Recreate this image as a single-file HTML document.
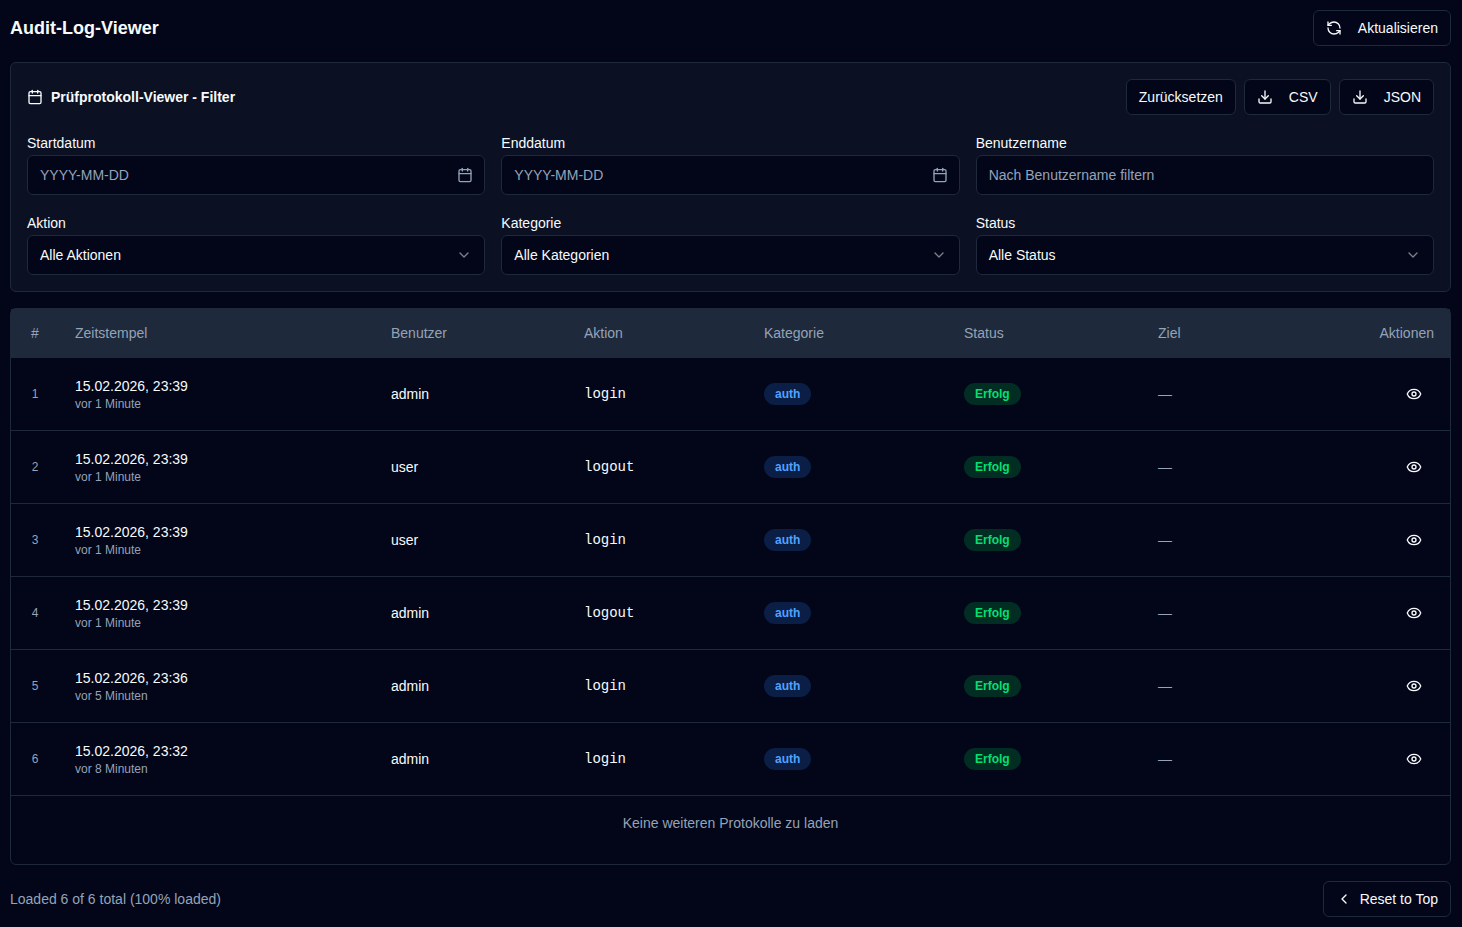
<!DOCTYPE html>
<html lang="de">
<head>
<meta charset="utf-8">
<title>Audit-Log-Viewer</title>
<style>
*{box-sizing:border-box;margin:0;padding:0}
html,body{width:1462px;height:927px;overflow:hidden}
body{background:#020618;color:#f8fafc;font-family:"Liberation Sans",sans-serif;font-size:14px;line-height:20px;position:relative}
svg{display:block}
.ic{fill:none;stroke:currentColor;stroke-width:2;stroke-linecap:round;stroke-linejoin:round}
.hdr{position:absolute;left:10px;top:10px;width:1441px;height:36px;display:flex;align-items:center;justify-content:space-between}
.title{font-size:18px;font-weight:bold;line-height:28px}
.btn{height:36px;border:1px solid #1e293b;border-radius:6px;background:#020618;color:#f8fafc;display:flex;align-items:center;padding:0 12px;font-size:14px;white-space:nowrap}
.btn .ic{width:16px;height:16px;margin-right:16px}
.card{position:absolute;left:10px;width:1441px;border:1px solid #1e293b;border-radius:6px}
.filter{top:62px;height:230px;background:#0b1122;padding:16px}
.fhead{display:flex;justify-content:space-between;align-items:center;height:36px}
.ftitle{display:flex;align-items:center;font-weight:bold}
.ftitle .ic{width:16px;height:16px;margin-right:8px}
.btns{display:flex;gap:8px}
.grid{display:grid;grid-template-columns:1fr 1fr 1fr;column-gap:16px;row-gap:16px;margin-top:16px}
.lbl{line-height:24px;height:24px}
.inp{height:40px;border:1px solid #1e293b;border-radius:6px;background:#020618;display:flex;align-items:center;justify-content:space-between;padding:0 12px}
.ph{color:#94a3b8}
.inp .ic{width:16px;height:16px;color:#94a3b8}
.inp .chev{color:#f8fafc;opacity:.5}
.inp .cal{margin-right:-1px}
.table{top:308px;height:557px;background:#020618}
table{border-collapse:collapse;table-layout:fixed;width:1439px}
th{height:48px;background:#1e293b;color:#94a3b8;font-weight:normal;text-align:left;padding:0 16px;border-bottom:1px solid #1e293b}
td{height:73px;padding:0 16px;border-bottom:1px solid #1e293b;vertical-align:middle}
.num{text-align:center;color:#94a3b8;font-size:12px}
th.num{font-size:14px}
.ts1{line-height:20px}
.ts2{font-size:12px;line-height:16px;color:#94a3b8}
.mono{font-family:"Liberation Mono",monospace}
.badge{display:inline-block;border-radius:9999px;border:1px solid transparent;padding:2px 10px;font-size:12px;font-weight:bold;line-height:16px;vertical-align:middle}
.b-auth{background:#0a1e46;color:#51a2ff}
.b-ok{background:#022d23;color:#05df72}
.dash{color:#94a3b8}
.eye{width:40px;height:40px;display:flex;align-items:center;justify-content:center;margin-left:auto}
.eye .ic{width:16px;height:16px}
.more{position:absolute;left:0;top:504px;width:1439px;text-align:center;color:#94a3b8}
.foot{position:absolute;left:10px;top:881px;width:1441px;height:36px;display:flex;align-items:center;justify-content:space-between}
.foot .txt{color:#94a3b8}
.foot .btn .ic{margin-right:8px}
</style>
</head>
<body>
<div class="hdr">
  <div class="title">Audit-Log-Viewer</div>
  <div class="btn"><svg class="ic" viewBox="0 0 24 24"><path d="M21 12a9 9 0 0 0-9-9 9.75 9.75 0 0 0-6.74 2.74L3 8"/><path d="M3 3v5h5"/><path d="M3 12a9 9 0 0 0 9 9 9.75 9.75 0 0 0 6.74-2.74L21 16"/><path d="M16 16h5v5"/></svg>Aktualisieren</div>
</div>

<div class="card filter">
  <div class="fhead">
    <div class="ftitle"><svg class="ic" viewBox="0 0 24 24"><path d="M8 2v4"/><path d="M16 2v4"/><rect width="18" height="18" x="3" y="4" rx="2"/><path d="M3 10h18"/></svg>Prüfprotokoll-Viewer - Filter</div>
    <div class="btns">
      <div class="btn">Zurücksetzen</div>
      <div class="btn"><svg class="ic" viewBox="0 0 24 24"><path d="M12 15V3"/><path d="M21 15v4a2 2 0 0 1-2 2H5a2 2 0 0 1-2-2v-4"/><path d="m7 10 5 5 5-5"/></svg>CSV</div>
      <div class="btn"><svg class="ic" viewBox="0 0 24 24"><path d="M12 15V3"/><path d="M21 15v4a2 2 0 0 1-2 2H5a2 2 0 0 1-2-2v-4"/><path d="m7 10 5 5 5-5"/></svg>JSON</div>
    </div>
  </div>
  <div class="grid">
    <div><div class="lbl">Startdatum</div><div class="inp"><span class="ph">YYYY-MM-DD</span><svg class="ic cal" viewBox="0 0 24 24"><path d="M8 2v4"/><path d="M16 2v4"/><rect width="18" height="18" x="3" y="4" rx="2"/><path d="M3 10h18"/></svg></div></div>
    <div><div class="lbl">Enddatum</div><div class="inp"><span class="ph">YYYY-MM-DD</span><svg class="ic cal" viewBox="0 0 24 24"><path d="M8 2v4"/><path d="M16 2v4"/><rect width="18" height="18" x="3" y="4" rx="2"/><path d="M3 10h18"/></svg></div></div>
    <div><div class="lbl">Benutzername</div><div class="inp"><span class="ph">Nach Benutzername filtern</span></div></div>
    <div><div class="lbl">Aktion</div><div class="inp"><span>Alle Aktionen</span><svg class="ic chev" viewBox="0 0 24 24"><path d="m6 9 6 6 6-6"/></svg></div></div>
    <div><div class="lbl">Kategorie</div><div class="inp"><span>Alle Kategorien</span><svg class="ic chev" viewBox="0 0 24 24"><path d="m6 9 6 6 6-6"/></svg></div></div>
    <div><div class="lbl">Status</div><div class="inp"><span>Alle Status</span><svg class="ic chev" viewBox="0 0 24 24"><path d="m6 9 6 6 6-6"/></svg></div></div>
  </div>
</div>

<div class="card table">
  <table>
    <colgroup><col style="width:48px"><col style="width:316px"><col style="width:193px"><col style="width:180px"><col style="width:200px"><col style="width:194px"><col style="width:150px"><col></colgroup>
    <thead><tr><th class="num">#</th><th>Zeitstempel</th><th>Benutzer</th><th>Aktion</th><th>Kategorie</th><th>Status</th><th>Ziel</th><th style="text-align:right">Aktionen</th></tr></thead>
    <tbody>
<tr><td class="num">1</td><td><div class="ts1">15.02.2026, 23:39</div><div class="ts2">vor 1 Minute</div></td><td>admin</td><td class="mono">login</td><td><span class="badge b-auth">auth</span></td><td><span class="badge b-ok">Erfolg</span></td><td class="dash">—</td><td><div class="eye"><svg class="ic" viewBox="0 0 24 24"><path d="M2.062 12.348a1 1 0 0 1 0-.696 10.75 10.75 0 0 1 19.876 0 1 1 0 0 1 0 .696 10.75 10.75 0 0 1-19.876 0"/><circle cx="12" cy="12" r="3"/></svg></div></td></tr>
<tr><td class="num">2</td><td><div class="ts1">15.02.2026, 23:39</div><div class="ts2">vor 1 Minute</div></td><td>user</td><td class="mono">logout</td><td><span class="badge b-auth">auth</span></td><td><span class="badge b-ok">Erfolg</span></td><td class="dash">—</td><td><div class="eye"><svg class="ic" viewBox="0 0 24 24"><path d="M2.062 12.348a1 1 0 0 1 0-.696 10.75 10.75 0 0 1 19.876 0 1 1 0 0 1 0 .696 10.75 10.75 0 0 1-19.876 0"/><circle cx="12" cy="12" r="3"/></svg></div></td></tr>
<tr><td class="num">3</td><td><div class="ts1">15.02.2026, 23:39</div><div class="ts2">vor 1 Minute</div></td><td>user</td><td class="mono">login</td><td><span class="badge b-auth">auth</span></td><td><span class="badge b-ok">Erfolg</span></td><td class="dash">—</td><td><div class="eye"><svg class="ic" viewBox="0 0 24 24"><path d="M2.062 12.348a1 1 0 0 1 0-.696 10.75 10.75 0 0 1 19.876 0 1 1 0 0 1 0 .696 10.75 10.75 0 0 1-19.876 0"/><circle cx="12" cy="12" r="3"/></svg></div></td></tr>
<tr><td class="num">4</td><td><div class="ts1">15.02.2026, 23:39</div><div class="ts2">vor 1 Minute</div></td><td>admin</td><td class="mono">logout</td><td><span class="badge b-auth">auth</span></td><td><span class="badge b-ok">Erfolg</span></td><td class="dash">—</td><td><div class="eye"><svg class="ic" viewBox="0 0 24 24"><path d="M2.062 12.348a1 1 0 0 1 0-.696 10.75 10.75 0 0 1 19.876 0 1 1 0 0 1 0 .696 10.75 10.75 0 0 1-19.876 0"/><circle cx="12" cy="12" r="3"/></svg></div></td></tr>
<tr><td class="num">5</td><td><div class="ts1">15.02.2026, 23:36</div><div class="ts2">vor 5 Minuten</div></td><td>admin</td><td class="mono">login</td><td><span class="badge b-auth">auth</span></td><td><span class="badge b-ok">Erfolg</span></td><td class="dash">—</td><td><div class="eye"><svg class="ic" viewBox="0 0 24 24"><path d="M2.062 12.348a1 1 0 0 1 0-.696 10.75 10.75 0 0 1 19.876 0 1 1 0 0 1 0 .696 10.75 10.75 0 0 1-19.876 0"/><circle cx="12" cy="12" r="3"/></svg></div></td></tr>
<tr><td class="num">6</td><td><div class="ts1">15.02.2026, 23:32</div><div class="ts2">vor 8 Minuten</div></td><td>admin</td><td class="mono">login</td><td><span class="badge b-auth">auth</span></td><td><span class="badge b-ok">Erfolg</span></td><td class="dash">—</td><td><div class="eye"><svg class="ic" viewBox="0 0 24 24"><path d="M2.062 12.348a1 1 0 0 1 0-.696 10.75 10.75 0 0 1 19.876 0 1 1 0 0 1 0 .696 10.75 10.75 0 0 1-19.876 0"/><circle cx="12" cy="12" r="3"/></svg></div></td></tr>
    </tbody>
  </table>
  <div class="more">Keine weiteren Protokolle zu laden</div>
</div>

<div class="foot">
  <div class="txt">Loaded 6 of 6 total (100% loaded)</div>
  <div class="btn"><svg class="ic" viewBox="0 0 24 24"><path d="m15 18-6-6 6-6"/></svg>Reset to Top</div>
</div>
</body>
</html>
